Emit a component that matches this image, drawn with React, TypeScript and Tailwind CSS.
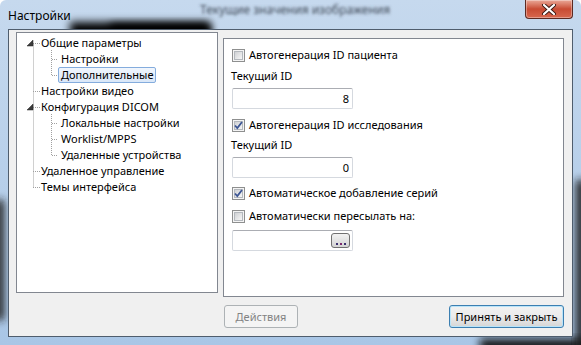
import React from "react";

const rows = [
  { label: "Общие параметры", level: 0 },
  { label: "Настройки", level: 1 },
  { label: "Дополнительные", level: 1, selected: true },
  { label: "Настройки видео", level: 0 },
  { label: "Конфигурация DICOM", level: 0 },
  { label: "Локальные настройки", level: 1 },
  { label: "Worklist/MPPS", level: 1 },
  { label: "Удаленные устройства", level: 1 },
  { label: "Удаленное управление", level: 0 },
  { label: "Темы интерфейса", level: 0 },
];

function Check({ checked }: { checked?: boolean }) {
  return (
    <span className="relative flex h-[13px] w-[13px] shrink-0 items-center justify-center border border-[#8e8f8f] bg-[#f4f4f4]">
      <span className="h-[9px] w-[9px] border border-[#b4b8bd] bg-gradient-to-br from-[#cfd1d4] to-[#f7f7f7]" />
      {checked && (
        <svg className="absolute left-0 top-0" width="11" height="11" viewBox="0 0 11 11">
          <path d="M2 5.5 L4.3 8 L9 2" fill="none" stroke="#3d5694" strokeWidth="1.8" />
        </svg>
      )}
    </span>
  );
}

function CheckRow({ label, checked }: { label: string; checked?: boolean }) {
  return (
    <div className="flex h-4 items-center gap-[4px] pl-[8px]">
      <Check checked={checked} />
      <span>{label}</span>
    </div>
  );
}

function TextBox({ value, browse }: { value?: string; browse?: boolean }) {
  return (
    <div className="ml-[8px] flex h-[21px] w-[121px] items-center justify-end rounded-[2px] border border-[#d5d9df] border-t-[#abadb3] bg-white pr-[3px]">
      {value}
      {browse && (
        <span className="mr-[-1px] flex h-[15px] w-[19px] items-end justify-center rounded-[3px] border border-[#707070] bg-gradient-to-b from-[#f2f2f2] to-[#d4d4d4] pb-[1px]">
          <svg width="11" height="3" viewBox="0 0 11 3">
            <rect x="1" y="0" width="2" height="2" fill="#3a2f6e" />
            <rect x="5" y="0" width="2" height="2" fill="#7a2a6e" />
            <rect x="9" y="0" width="2" height="2" fill="#3a2f6e" />
          </svg>
        </span>
      )}
    </div>
  );
}

function TreeLines() {
  const c = (i: number) => 10 + 16 * i + 0.5;
  const roots = [0, 3, 4, 8, 9];
  const kids = [1, 2, 5, 6, 7];
  return (
    <svg className="pointer-events-none absolute left-0 top-0" width="200" height="200">
      <g stroke="#a0a0a0" strokeDasharray="1 1" strokeWidth="1">
        <line x1="16.5" y1={c(0)} x2="16.5" y2={c(9)} />
        {roots.map((i) => (
          <line key={i} x1="16" y1={c(i)} x2="23" y2={c(i)} />
        ))}
        <line x1="34.5" y1="17" x2="34.5" y2={c(2)} />
        <line x1="34.5" y1="81" x2="34.5" y2={c(7)} />
        {kids.map((i) => (
          <line key={i} x1="35" y1={c(i)} x2="41" y2={c(i)} />
        ))}
      </g>
      {[0, 4].map((i) => {
        const y = 10 + 16 * i;
        return (
          <polygon
            key={i}
            points={`16,${y - 3} 16,${y + 3} 10,${y + 3}`}
            fill="#3b3b3b"
            stroke="#262626"
            strokeWidth="0.5"
          />
        );
      })}
    </svg>
  );
}

export default function App() {
  return (
    <div className="relative h-[345px] w-[581px] overflow-hidden rounded-t-[6px] text-[11px] leading-4 text-black [font-family:'Noto_Sans',sans-serif]">
      {/* glass background */}
      <svg className="absolute inset-0" width="581" height="345">
        <defs>
          <linearGradient id="g" x1="0" y1="0" x2="0" y2="1">
            <stop offset="0" stopColor="#c6d9ee" />
            <stop offset="1" stopColor="#a9c6e6" />
          </linearGradient>
          <filter id="b1" x="-50%" y="-50%" width="200%" height="200%">
            <feGaussianBlur stdDeviation="4" />
          </filter>
          <filter id="b2" x="-50%" y="-50%" width="200%" height="200%">
            <feGaussianBlur stdDeviation="1.8" />
          </filter>
        </defs>
        <rect width="581" height="345" fill="url(#g)" />
        <rect x="70" y="22" width="140" height="20" fill="#000" filter="url(#b1)" />
        <rect x="110" y="24" width="100" height="14" fill="#000" filter="url(#b1)" />
        <rect x="-6" y="200" width="10" height="120" fill="#222" filter="url(#b1)" />
        <rect x="480" y="339" width="110" height="12" fill="#111" filter="url(#b1)" />
        <rect x="576" y="180" width="10" height="170" fill="#1a1a1a" filter="url(#b1)" />
        <text x="200" y="14" fontSize="12" fill="#3e4856" filter="url(#b2)" fontFamily="Noto Sans">
          Текущие значения изображения
        </text>
      </svg>

      <div className="relative flex h-full flex-col">
        {/* title bar */}
        <div className="flex h-[29px] items-start justify-between pl-[8px] pr-[8px]">
          <span className="pt-[8px] text-[12px]">Настройки</span>
          <div className="flex h-[19px] w-[48px] items-center justify-center rounded-b-[4px] border border-t-0 border-[#5c2a22] bg-gradient-to-b from-[#e9a898] via-[#c84b33] to-[#d7674e] shadow-[inset_0_0_0_1px_rgba(255,255,255,0.35)]">
            <svg width="16" height="11" viewBox="0 0 16 11">
              <path d="M3 1 L13 10 M13 1 L3 10" stroke="#3a1a14" strokeWidth="4" strokeLinecap="round" />
              <path d="M3 1 L13 10 M13 1 L3 10" stroke="#ffffff" strokeWidth="2.2" strokeLinecap="round" />
            </svg>
          </div>
        </div>

        {/* client area */}
        <div className="mx-[8px] flex h-[308px] flex-col border border-[#4f5d6d] bg-[#f0f0f0] pl-[7px] pr-[8px] pt-[2px]">
          <div className="flex items-start gap-[5px]">
            {/* tree */}
            <div className="relative h-[261px] w-[202px] border border-[#828790] bg-white pt-[2px]">
              <TreeLines />
              {rows.map((r) => (
                <div key={r.label} className={`flex h-4 ${r.level === 0 ? "pl-[21px]" : "pl-[41px]"}`}>
                  <span
                    className={`h-4 whitespace-nowrap rounded-[2px] border px-[2px] leading-[14px] ${
                      r.selected ? "border-[#84acdd] bg-gradient-to-b from-[#f1f6fd] to-[#d9e7f8]" : "border-transparent"
                    }`}
                  >
                    {r.label}
                  </span>
                </div>
              ))}
            </div>

            {/* settings */}
            <div className="mt-[6px] h-[259px] w-[341px] border border-[#828790] bg-white pt-[8px]">
              <CheckRow label="Автогенерация ID пациента" />
              <div className="mt-[5px] h-4 pl-[7px]">Текущий ID</div>
              <div className="mt-[4px]">
                <TextBox value="8" />
              </div>
              <div className="mt-[8px]">
                <CheckRow label="Автогенерация ID исследования" checked />
              </div>
              <div className="mt-[4px] h-4 pl-[7px]">Текущий ID</div>
              <div className="mt-[4px]">
                <TextBox value="0" />
              </div>
              <div className="mt-[7px]">
                <CheckRow label="Автоматическое добавление серий" checked />
              </div>
              <div className="mt-[7px]">
                <CheckRow label="Автоматически пересылать на:" />
              </div>
              <div className="mt-[6px]">
                <TextBox browse />
              </div>
            </div>
          </div>

          {/* buttons */}
          <div className="mt-[8px] flex items-center justify-between pl-[208px]">
            <button className="flex h-[23px] w-[74px] items-center justify-center rounded-[3px] border border-[#adb2b5] bg-[#f4f4f4] text-[#838383]">
              Действия
            </button>
            <button className="flex h-[23px] w-[115px] items-center justify-center rounded-[3px] border border-[#3c7fb1] bg-gradient-to-b from-[#f2f2f2] via-[#ebebeb] to-[#d5d5d5] shadow-[inset_0_0_0_1px_#b9e4f9]">
              Принять и закрыть
            </button>
          </div>
        </div>
      </div>
    </div>
  );
}
